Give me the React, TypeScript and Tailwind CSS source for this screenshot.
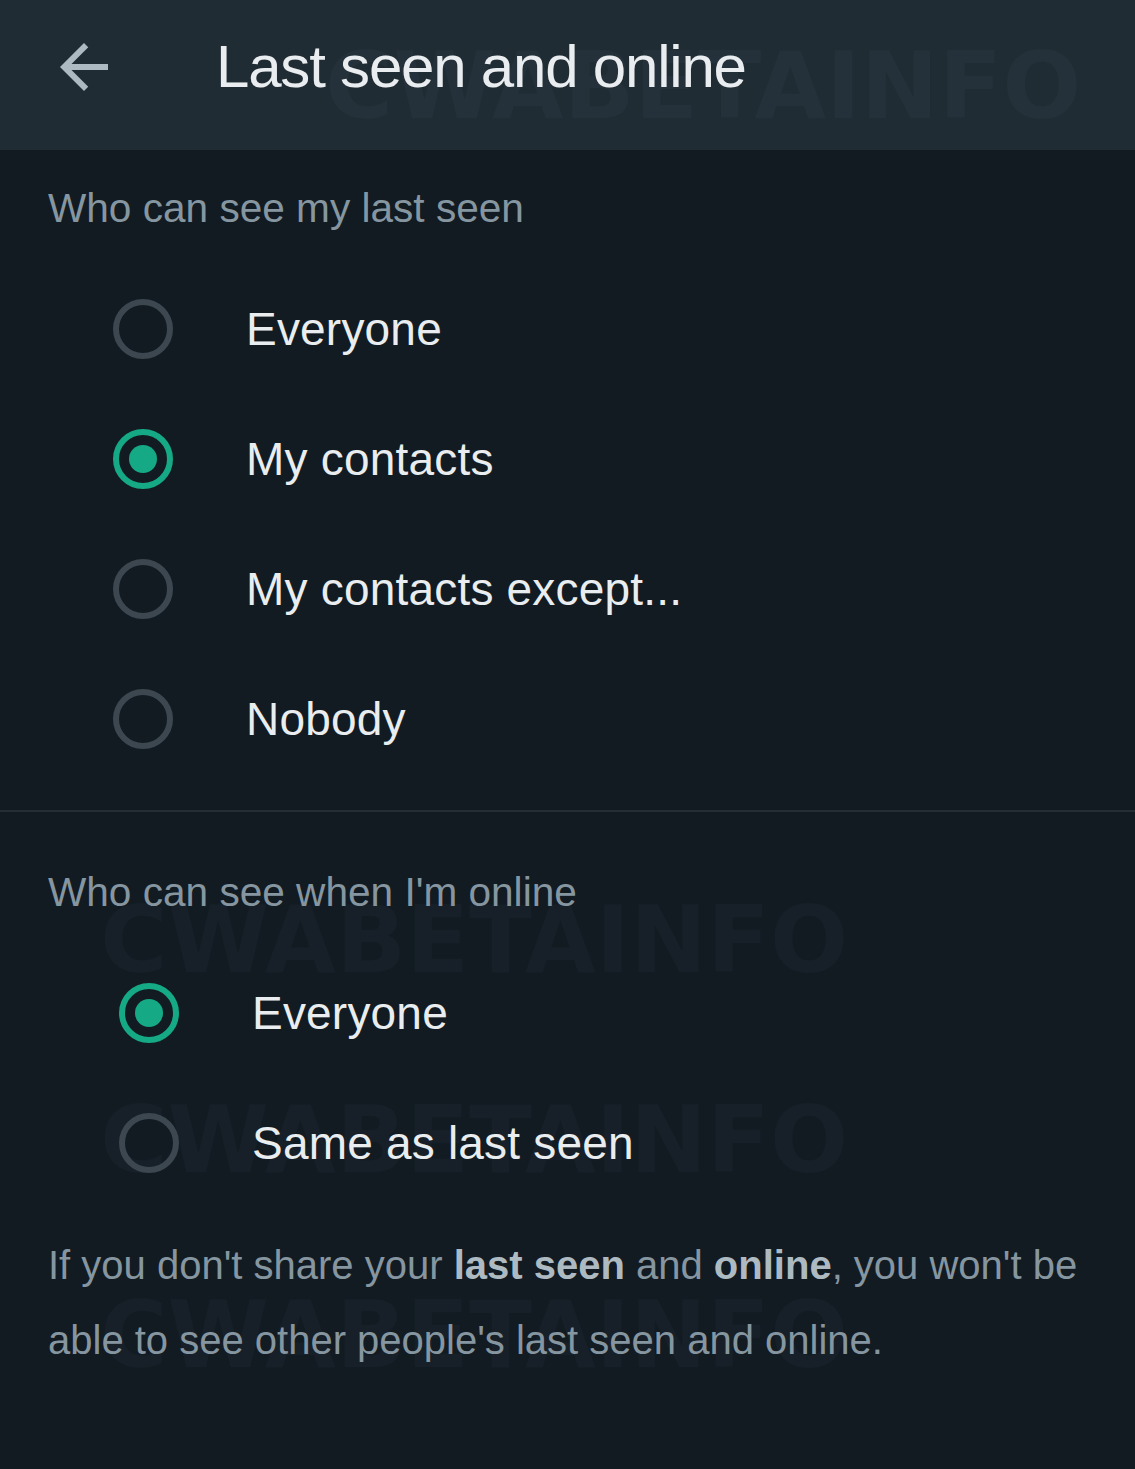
import { ReactNode } from 'react'

const FONT = { fontFamily: '"Liberation Sans", Arial, sans-serif' }

type Option = { label: string; checked?: boolean }

const lastSeenOptions: Option[] = [
  { label: 'Everyone' },
  { label: 'My contacts', checked: true },
  { label: 'My contacts except...' },
  { label: 'Nobody' },
]

const onlineOptions: Option[] = [{ label: 'Everyone', checked: true }, { label: 'Same as last seen' }]

// faint site watermark that sits over the screenshot
function Watermark({ className }: { className: string }) {
  return (
    <div
      aria-hidden
      className={`pointer-events-none absolute select-none whitespace-nowrap font-bold leading-none ${className}`}
      style={{ fontFamily: '"DejaVu Sans", sans-serif' }}
    >
      CWABETAINFO
    </div>
  )
}

function Radio({ checked }: { checked?: boolean }) {
  if (checked) {
    return (
      <div className="flex h-[60px] w-[60px] shrink-0 items-center justify-center rounded-full border-[6px] border-[#15a985]">
        <div className="h-[28px] w-[28px] rounded-full bg-[#15a985]" />
      </div>
    )
  }
  return <div className="h-[60px] w-[60px] shrink-0 rounded-full border-[6px] border-[#3c4750]" />
}

function OptionRow({ option, indent }: { option: Option; indent: string }) {
  return (
    <div className={`flex h-[130px] items-center gap-[73px] ${indent}`}>
      <Radio checked={option.checked} />
      <span className="text-[46px] leading-none tracking-[0.2px] text-[#e9edef]">{option.label}</span>
    </div>
  )
}

function SectionLabel({ children }: { children: ReactNode }) {
  return <div className="h-[48px] pl-[48px] text-[40.6px] leading-[48px] text-[#8696a0]">{children}</div>
}

export default function App() {
  return (
    <div className="min-h-[1469px] w-full overflow-hidden bg-[#121b22]" style={FONT}>
      <header className="relative flex h-[150px] items-center bg-[#202c33] pb-[16px]">
        <Watermark className="left-[325px] top-[40px] text-[93px] text-[#24313a]" />
        <svg viewBox="0 0 24 24" className="relative ml-[48px] h-[72px] w-[72px] fill-[#aebac1]">
          <path d="M20 11H7.83l5.59-5.59L12 4l-8 8 8 8 1.41-1.41L7.83 13H20v-2z" />
        </svg>
        <h1 className="relative ml-[96px] text-[60px] leading-none tracking-[-1.2px] text-[#e9edef]">
          Last seen and online
        </h1>
      </header>

      <main className="relative">
        <Watermark className="left-[100px] top-[745px] text-[92px] text-[#172028]" />
        <Watermark className="left-[100px] top-[945px] text-[92px] text-[#172028]" />
        <Watermark className="left-[100px] top-[1140px] text-[92px] text-[#172028]" />

        <section className="relative pt-[34px]">
          <SectionLabel>Who can see my last seen</SectionLabel>
          <div className="mt-[32px]">
            {lastSeenOptions.map((o) => (
              <OptionRow key={o.label} option={o} indent="pl-[113px]" />
            ))}
          </div>
        </section>

        <div className="relative mt-[26px] h-[2px] bg-[#222d34]" />

        <section className="relative pt-[56px]">
          <SectionLabel>Who can see when I'm online</SectionLabel>
          <div className="mt-[32px]">
            {onlineOptions.map((o) => (
              <OptionRow key={o.label} option={o} indent="pl-[119px]" />
            ))}
          </div>
        </section>

        <p className="relative mt-[20px] pl-[48px] pr-[40px] text-[40px] leading-[75px] text-[#8696a0]">
          If you don't share your <span className="font-bold text-[#aebac1]">last seen</span> and{' '}
          <span className="font-bold text-[#aebac1]">online</span>, you won't be able to see other people's last seen
          and online.
        </p>
      </main>
    </div>
  )
}
